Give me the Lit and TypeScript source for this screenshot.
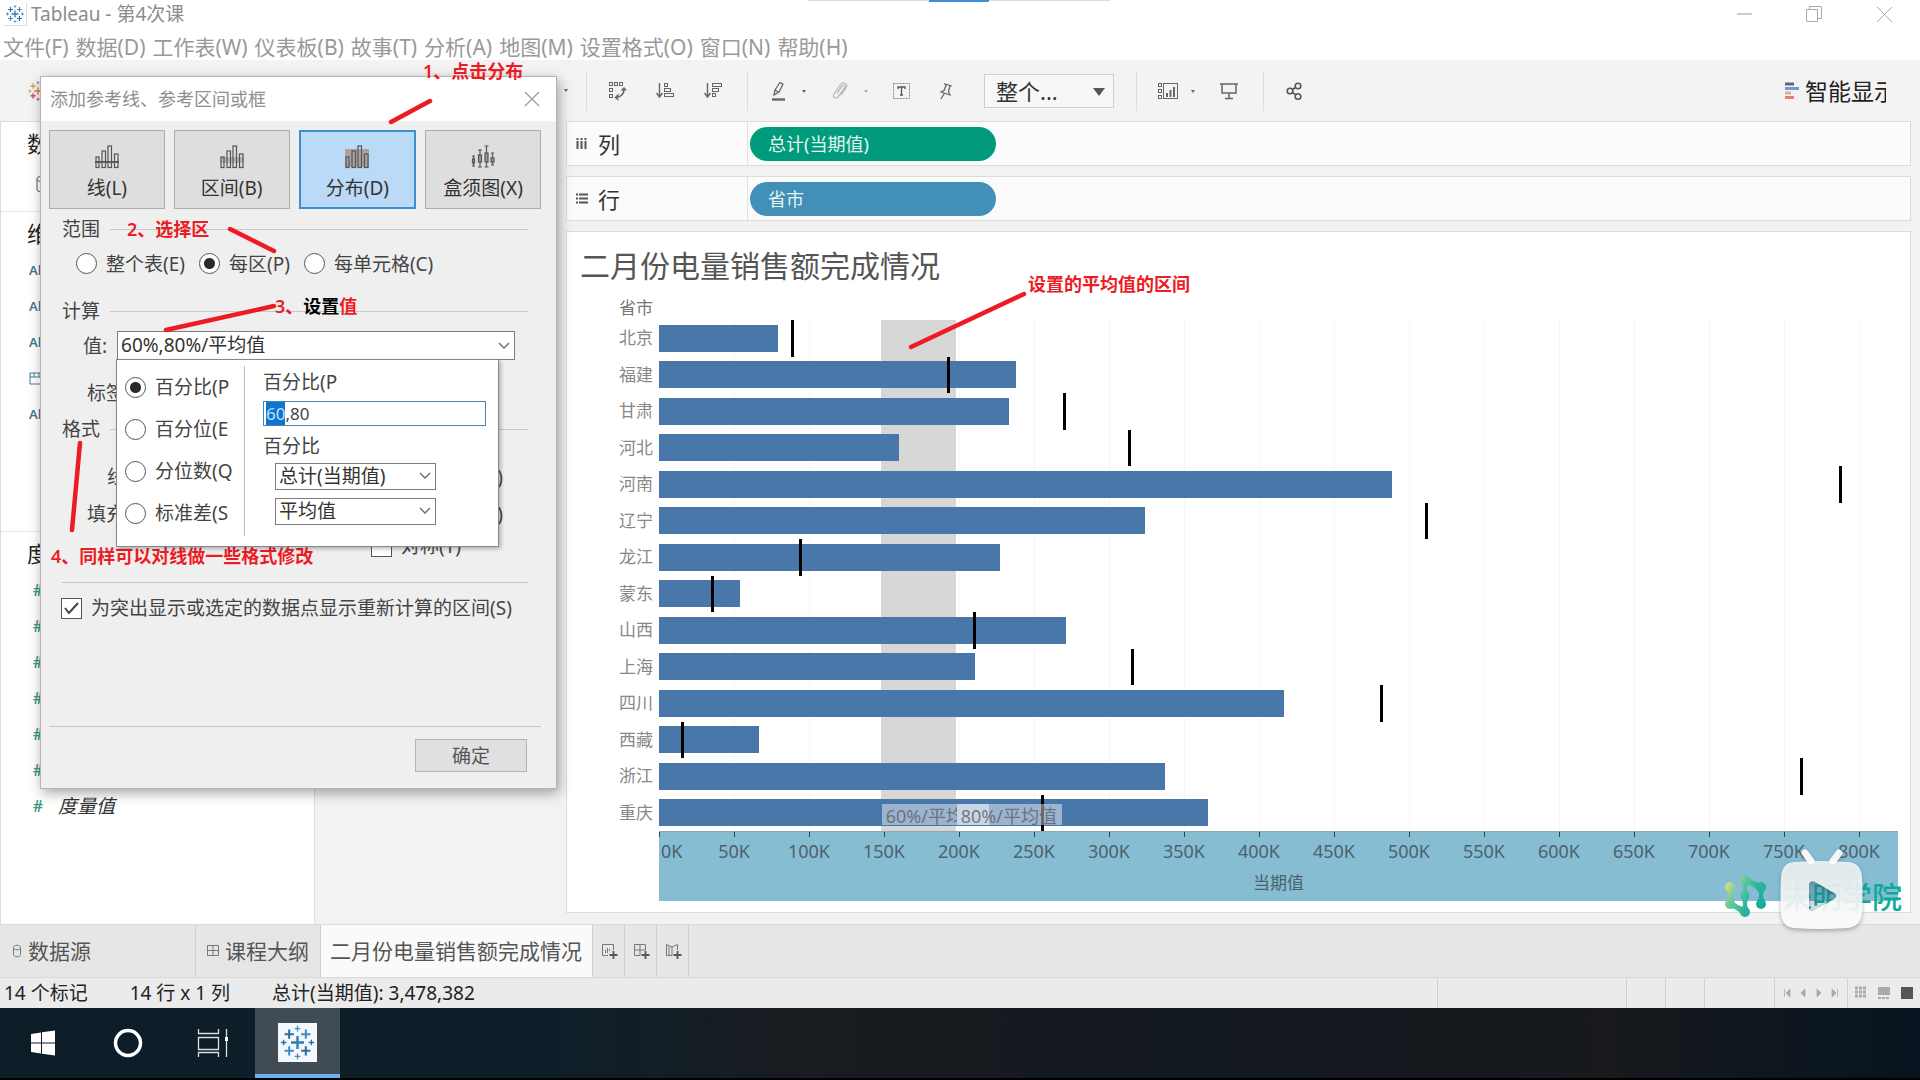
import { LitElement, html, css, svg } from "lit";
import { customElement, query } from "lit/decorators.js";

const AXIS_MAX = 826;
const pct = (v: number) => `${(v / AXIS_MAX) * 100}%`;

interface Region { name: string; value: number; target: number; }

const REGIONS: Region[] = [
  { name: "北京", value: 79.5, target: 88.7 },
  { name: "福建", value: 238, target: 192.4 },
  { name: "甘肃", value: 233, target: 270 },
  { name: "河北", value: 160, target: 313.5 },
  { name: "河南", value: 488.5, target: 787 },
  { name: "辽宁", value: 324, target: 511.5 },
  { name: "龙江", value: 227, target: 94 },
  { name: "蒙东", value: 54, target: 35 },
  { name: "山西", value: 271, target: 210 },
  { name: "上海", value: 210.5, target: 315.5 },
  { name: "四川", value: 416.5, target: 481 },
  { name: "西藏", value: 66.5, target: 15.3 },
  { name: "浙江", value: 337, target: 761 },
  { name: "重庆", value: 366, target: 255 },
];
const TICKS = Array.from({ length: 17 }, (_, i) => i * 50);

const icon = (w: number, h: number, body: unknown) =>
  html`<svg class="icon" width=${w} height=${h} viewBox="0 0 ${w} ${h}" aria-hidden="true">${body}</svg>`;

const plus = (x: number, y: number, r: number, c: string, w: number) =>
  svg`<path d="M${x - r} ${y}H${x + r}M${x} ${y - r}V${y + r}" stroke=${c} stroke-width=${w} fill="none"/>`;

const tableauMark = (size: number, c: string[]) => html`
  <svg class="icon" width=${size} height=${size} viewBox="0 0 40 40" aria-hidden="true">
    ${plus(20, 20, 7, c[0], 2.6)}
    ${plus(11, 11, 5, c[1], 2.2)} ${plus(29, 11, 5, c[2], 2.2)}
    ${plus(11, 29, 5, c[3], 2.2)} ${plus(29, 29, 5, c[4], 2.2)}
    ${plus(20, 5, 3, c[2], 1.4)} ${plus(20, 35, 3, c[3], 1.4)}
    ${plus(5, 20, 3, c[1], 1.4)} ${plus(35, 20, 3, c[4], 1.4)}
  </svg>`;
const BLUES = ["#2d7fb8", "#2a6f9e", "#3a8fc4", "#3a8fc4", "#2a6f9e"];
const MIXED = ["#e8762c", "#c9a13a", "#5b8fb0", "#c03a4a", "#1f457e"];

const caret = (c = "#666") => svg`<path d="M34 9h4l-2 3z" fill=${c}/>`;

const icons = {
  swap: icon(20, 20, svg`<g fill="none" stroke="#666"><rect x="2.500" y="1.500" width="3" height="3"/><rect x="7.500" y="1.500" width="3" height="3"/><rect x="12.500" y="1.500" width="3" height="3"/><rect x="2.500" y="7.500" width="3" height="3"/><rect x="2.500" y="13.500" width="3" height="3"/><path d="M17 8c0 5-3 8-8 8.500M14.500 9.500L17 7l2 2.500M11.500 13.500L8.500 16.500l3 2.500" stroke-width="1.500"/></g>`),
  asc: icon(20, 20, svg`<g fill="none" stroke="#666"><path d="M4.500 2v13M1.500 12l3 4 3-4" stroke-width="1.400"/><rect x="9.500" y="2.500" width="3" height="3"/><rect x="9.500" y="7.500" width="6" height="3"/><rect x="9.500" y="12.500" width="9" height="3"/></g>`),
  desc: icon(20, 20, svg`<g fill="none" stroke="#666"><path d="M4.500 2v13M1.500 12l3 4 3-4" stroke-width="1.400"/><rect x="9.500" y="2.500" width="9" height="3"/><rect x="9.500" y="7.500" width="6" height="3"/><rect x="9.500" y="12.500" width="3" height="3"/></g>`),
  pen: icon(38, 20, svg`<g fill="none" stroke="#666" stroke-width="1.300"><path d="M6 14l1-5 5-7.500 3 1.500-4 8zM7 9l4 2.500"/><path d="M4 18.500h13" stroke-width="2.400"/></g>${caret()}`),
  clip: icon(38, 20, svg`<path d="M7 12l5-7c1.500-2 4 0 2.500 2l-6.500 9c-2 2.500-6 0-4-3l6.500-9.500c2.500-3.500 8-.5 5.500 3.500l-5 7" fill="none" stroke="#bbb" stroke-width="1.300"/>${caret("#aaa")}`),
  text: icon(20, 20, svg`<rect x="1.500" y="2.500" width="16" height="15" fill="none" stroke="#888" stroke-dasharray="2 1"/><path d="M6 8V6h7v2M9.500 6v8M8 14h3" fill="none" stroke="#555" stroke-width="1.300"/>`),
  pin: icon(20, 20, svg`<path d="M9 3l6 2-1.500 1-1 5 1.500 3-9-3 3-1.500 2-5zM8.500 12L5 18" fill="none" stroke="#666" stroke-width="1.300"/>`),
  cards: icon(38, 20, svg`<g fill="none" stroke="#666"><rect x="1.500" y="2.500" width="3" height="3"/><rect x="1.500" y="8.500" width="3" height="3"/><rect x="1.500" y="14.500" width="3" height="3"/><rect x="6.500" y="2.500" width="14" height="15"/><path d="M10 16v-4M13.500 16V9M17 16V6" stroke-width="2"/></g>${caret()}`),
  present: icon(20, 20, svg`<g fill="none" stroke="#666" stroke-width="1.500"><path d="M1 3h18M3 3v9h14V3M10 12v5M6 17.500h8"/></g>`),
  share: icon(20, 20, svg`<g fill="none" stroke="#555" stroke-width="1.600"><circle cx="6" cy="10" r="2.800"/><circle cx="14" cy="5" r="2.800"/><circle cx="14" cy="15.500" r="2.800"/><path d="M8.500 8.500l3-2M8.500 11.500l3 2.200"/></g>`),
  smart: icon(16, 18, svg`<path d="M1 2h9" stroke="#6f6079" stroke-width="3"/><path d="M1 6.500h14" stroke="#6d9bd8" stroke-width="3"/><path d="M1 11h6" stroke="#eda788" stroke-width="3"/><path d="M1 15.500h9" stroke="#e77c78" stroke-width="3"/>`),
  chevron: icon(12, 8, svg`<path d="M1 1l5 5 5-5" fill="none" stroke="#666" stroke-width="1.300"/>`),
};

const miniBars = (extra: unknown) => html`
  <svg class="icon" width="24" height="24" viewBox="0 0 24 24" aria-hidden="true">
    ${extra}
    <g fill="none" stroke="#555" stroke-width="1.200">
      <rect x="1" y="12" width="3" height="10.500"/><rect x="7" y="6" width="3.500" height="16.500"/>
      <rect x="13" y="1" width="3.500" height="21.500"/><rect x="19.500" y="9" width="3.500" height="13.500"/>
    </g>
  </svg>`;

const KINDS = [
  { label: "线(L)", on: false, art: miniBars(svg`<path d="M0 17h24" stroke="#333" stroke-width="1.500"/>`) },
  { label: "区间(B)", on: false, art: miniBars(svg`<rect x="0" y="12" width="24" height="6" fill="#b5b5b5"/>`) },
  { label: "分布(D)", on: true, art: miniBars(svg`<rect x="0" y="4" width="24" height="18" fill="#a9a29e"/>`) },
  { label: "盒须图(X)", on: false, art: html`
    <svg class="icon" width="24" height="24" viewBox="0 0 24 24" aria-hidden="true">
      <g stroke="#555" stroke-width="1.200" fill="#999">
        <path d="M2.500 11v10M9 5v17M15.500 1v21M21.500 8v12M1 11h3M1 21h3M7 5h4M7 22h4M13.500 1h4M13.500 22h4M20 8h3M20 20h3"/>
        <rect x="1.500" y="14" width="2" height="4"/><rect x="7.500" y="10" width="3" height="7"/>
        <rect x="14" y="8" width="3" height="9"/><rect x="20" y="13" width="3" height="4"/>
      </g>
    </svg>` },
];

@customElement("app-root")
export class AppRoot extends LitElement {
  @query("#percents") private percents!: HTMLInputElement;

  static styles = css`
    :host {
      display: flex; flex-direction: column; position: relative; min-height: 100vh; overflow: hidden;
      font-family: "Noto Sans", "Noto Sans CJK SC", sans-serif; font-size: 19px; line-height: 24px;
      color: #444; background: #fff;
    }
    *, *::before, *::after { box-sizing: border-box; }
    button, input, select { font: inherit; color: inherit; margin: 0; }
    button { background: none; border: 0; padding: 0; white-space: nowrap; }
    .icon { display: block; flex: none; }
    h1, h2, p { margin: 0; font-weight: 400; }

    .titlebar { display: flex; align-items: center; gap: 4px; height: 34px; padding: 0 27px 6px 4px; color: #8c8c8c; }
    .appicon { border: 1px solid #ddd; border-width: 0 1px 1px 0; padding: 1px; }
    .controls { margin-left: auto; display: flex; gap: 52px; }
    .notch { position: absolute; top: 0; left: 808px; width: 302px; height: 1px; background: #ddd; display: flex; justify-content: center; }
    .notch i { width: 60px; height: 2px; background: #3f8fd8; }
    .menu { display: flex; gap: 7px; height: 26px; padding-left: 3px; font-size: 21px; line-height: 26px; color: #999; }

    .toolbar { display: flex; align-items: center; height: 61px; padding: 0 34px 0 27px; background: #f3f3f3; }
    .first { width: 537px; }
    .sep { width: 1px; height: 40px; background: #ddd; margin: 0 20px 0 18px; }
    .tools { display: flex; align-items: center; gap: 24px; padding-right: 6px; }
    .wide { gap: 28px; }
    .fit { display: flex; position: relative; margin: 0 4px 0 22px; }
    .fit select { appearance: none; width: 130px; height: 34px; padding: 0 40px 0 11px; border: 1px solid #d0d0d0; border-radius: 0; background: #f7f7f7; font-size: 22px; line-height: 32px; color: #333; }
    .fit::after { content: ""; position: absolute; right: 9px; top: 14px; border: 6px solid transparent; border-top: 8px solid #555; border-bottom: 0; }
    .smart { margin-left: auto; display: flex; align-items: center; gap: 5px; width: 102px; overflow: hidden; font-size: 23px; line-height: 32px; color: #222; }

    .body { flex: 1; display: flex; background: #f2f2f2; }
    .side { width: 315px; background: #fff; border: 1px solid #dcdcdc; border-width: 1px 1px 0 1px; display: flex; flex-direction: column; font-size: 22px; color: #222; padding-top: 8px; }
    .side .head { height: 26px; padding-left: 26px; line-height: 26px; }
    .side .db { height: 37px; padding: 8px 0 0 35px; margin-top: 11px; }
    .side .rule { height: 1px; background: #e6e6e6; margin: 7px 0 8px; }
    .side ul { list-style: none; margin: 0; padding: 6px 0 0; font-size: 19px; }
    .side li { height: 36px; display: flex; align-items: center; gap: 15px; padding-left: 28px; font-size: 13px; font-weight: 600; color: #3d7d96; }
    .side li.num { font-size: 16px; color: #3f9a86; }
    .side li em { font-size: 19px; font-weight: 400; color: #333; }
    .hash { width: 14px; text-align: right; }
    .dims { height: 304px; }

    .work { flex: 1; min-width: 0; margin: 0 9px 11px 251px; display: flex; flex-direction: column; gap: 10px; }
    .shelf { display: flex; height: 45px; border: 1px solid #dcdcdc; background: #fbfbfb; color: #333; }
    .shelf .name { width: 181px; border-right: 1px solid #e0e0e0; display: flex; align-items: center; gap: 10px; padding-left: 9px; font-size: 22px; }
    .pill { align-self: center; width: 246px; height: 34px; margin-left: 2px; padding-left: 18px; border-radius: 17px; text-align: left; font-size: 18px; color: #e6f5f2; background: #009b7d; }
    .pill.dim { background: #428fb8; }
    .view { flex: 1; display: flex; flex-direction: column; border: 1px solid #dcdcdc; background: #fff; padding: 14px 12px 11px 0; }
    .view h1 { font-size: 30px; line-height: 40px; padding-left: 13px; color: #555; }
    .chart { flex: 1; display: grid; grid-template-columns: 92px 1fr; grid-template-rows: 34px 1fr 70px; font-size: 17px; color: #888; }
    .field { text-align: right; padding: 11px 6px 0 0; line-height: 22px; color: #777; }
    .names { grid-row: 2; display: flex; flex-direction: column; text-align: right; padding-right: 6px; }
    .names span { flex: 1; display: flex; align-items: center; justify-content: flex-end; }
    .plot { grid-row: 2; grid-column: 2; position: relative; display: flex; flex-direction: column; }
    .grid { position: absolute; top: 0; bottom: 0; width: 1px; background: #f6f6f6; }
    .band { position: absolute; top: 0; bottom: 0; background: #d7d7d7; }
    .row { flex: 1; position: relative; display: flex; align-items: center; }
    .bar { height: 75%; background: #4a77aa; }
    .mark { position: absolute; top: 0; bottom: 0; width: 3px; margin-left: -1px; background: #000; }
    .reflabel { position: absolute; bottom: 6px; height: 21px; line-height: 25px; padding: 0 5px 0 4px; font-size: 18px; color: rgba(95, 95, 100, 0.8); background: rgba(255, 255, 255, 0.45); white-space: nowrap; }
    .reflabel b { display: block; font-weight: 400; width: 71px; overflow: hidden; }
    .reflabel.cut { padding-right: 32px; }
    .axis { grid-row: 3; grid-column: 2; position: relative; background: #86bdd3; border-top: 1px solid #8fa9b3; color: #4c626c; font-size: 18px; }
    .tick { position: absolute; top: 0; width: 1px; height: 5px; background: #345; font-style: normal; }
    .tick span { position: absolute; top: 7px; left: 0; transform: translateX(-50%); }
    .tick.zero span { transform: none; left: 2px; }
    .axis p { padding-top: 39px; text-align: center; font-size: 17px; }

    .tabs { display: flex; height: 53px; background: #e6e6e6; border-top: 1px solid #dcdcdc; font-size: 21px; }
    .tabs button { display: flex; align-items: center; gap: 5px; padding: 0 11px 0 10px; border-right: 1px solid #cfcfcf; color: #555; }
    .tabs .source { width: 196px; padding-left: 12px; }
    .tabs .active { background: #fafafa; padding: 0 10px 0 9px; }
    .tabs .add { width: 32px; padding: 0; justify-content: center; }
    .status { display: flex; align-items: stretch; height: 31px; background: #ebebeb; border-top: 1px solid #d8d8d8; color: #222; line-height: 31px; }
    .counts { display: flex; gap: 42px; padding-left: 4px; margin-right: auto; }
    .cell { border-left: 1px solid #cfcfcf; display: flex; align-items: center; justify-content: center; gap: 10px; width: 39px; }
    .c189 { width: 189px; } .c69 { width: 70px; } .c74 { width: 73px; }
    .taskbar { display: flex; height: 72px; border-bottom: 2px solid #000; background: linear-gradient(90deg, #0c1d28 0%, #0e1f2a 28%, #191c20 42%, #12181f 62%, #17191d 84%, #06141f 100%); }
    .taskbar button { width: 85px; display: flex; align-items: center; justify-content: center; }
    .taskbar .running { background: #404b54; border-bottom: 4px solid #6fb1ee; padding-top: 2px; }
    .tile { background: #f4f7fb; padding: 1px; }

    .dialog { position: absolute; left: 40px; top: 76px; width: 517px; border: 1px solid #b4b4b4; background: #efefef; box-shadow: 2px 4px 12px rgba(0, 0, 0, 0.35); padding-bottom: 16px; }
    .dialog header { display: flex; align-items: center; justify-content: space-between; height: 44px; padding: 0 16px 0 9px; background: #fff; }
    .dialog h2 { font-size: 18px; color: #8f8f8f; }
    .content { padding: 9px 15px 0 8px; display: flex; flex-direction: column; }
    .kinds { display: flex; gap: 9px; }
    .kinds button { flex: 1; height: 79px; border: 1px solid #adadad; background: #dedede; display: flex; flex-direction: column; align-items: center; gap: 7px; padding-top: 14px; color: #333; }
    .kinds .on { background: #bbdaf7; border: 2px solid #3c8fd0; padding-top: 13px; }
    .legend { display: flex; align-items: center; gap: 10px; margin: 8px 13px 0 13px; }
    .legend::after { content: ""; flex: 1; height: 1px; background: #c8c8c8; }
    input[type="radio"] { appearance: none; width: 21px; height: 21px; border: 1px solid #555; border-radius: 50%; background: #fff; flex: none; }
    input[type="radio"]:checked { background: radial-gradient(circle, #2a2a2a 0 5px, #fff 6px); }
    input[type="checkbox"] { appearance: none; width: 21px; height: 21px; border: 1px solid #555; background: #fff; flex: none; }
    .tickbox { position: relative; display: flex; }
    .tickbox svg { position: absolute; left: 3px; top: 4px; pointer-events: none; }
    .scope { display: flex; gap: 14px; padding: 8px 0 0 27px; height: 37px; align-items: center; }
    .opt { display: flex; align-items: center; gap: 9px; white-space: nowrap; }
    .scoped { margin-top: 21px; }
    .value { position: relative; display: flex; align-items: center; margin: 8px 26px 0 34px; gap: 10px; }
    .combo { position: relative; display: flex; flex: 1; }
    .combo select { appearance: none; width: 100%; height: 29px; padding: 0 24px 0 3px; border: 1px solid #7d7d7d; border-radius: 0; background: #fff; color: #333; line-height: 27px; }
    .combo > .icon { position: absolute; right: 5px; top: 11px; pointer-events: none; }
    .popup { position: absolute; z-index: 1; left: 33px; top: 28px; width: 383px; height: 188px; border: 1px solid #888; background: #fff; display: flex; box-shadow: 2px 2px 4px rgba(0, 0, 0, 0.25); }
    .modes { width: 128px; margin: 6px 0 10px; border-right: 1px solid #bbb; padding: 9px 0 0 8px; display: flex; flex-direction: column; gap: 18px; }
    .modes .opt { width: 108px; overflow: hidden; }
    .right { flex: 1; padding: 10px 12px 0 18px; display: flex; flex-direction: column; }
    .right input { height: 25px; width: 100%; border: 1px solid #4a7fb5; padding: 0 2px; margin: 7px 0 8px; outline: 0; font-size: 17px; background: #fff; }
    .right input::selection { background: #0f74cf; color: #bfe0ff; }
    .stack { display: flex; flex-direction: column; gap: 8px; width: 161px; margin: 5px 0 0 12px; }
    .stack select { height: 27px; line-height: 25px; }
    .stack .combo > .icon { top: 9px; }
    .field-row { display: flex; justify-content: space-between; padding: 0 38px 0 38px; margin-top: 21px; }
    .format { margin-top: 12px; }
    .line { margin-top: 24px; padding-left: 58px; }
    .fill { margin-top: 13px; }
    .sym { margin: 8px 0 0 322px; }
    .divider { height: 1px; background: #c4c4c4; margin: 24px 13px 13px; }
    .recalc { margin-left: 12px; }
    .foot { display: flex; justify-content: flex-end; border-top: 1px solid #c4c4c4; margin-top: 106px; padding: 12px 14px 0 0; }
    .foot button { width: 112px; height: 33px; border: 1px solid #b4b4b4; background: #e0e0e0; color: #555; }

    .ink { position: absolute; left: 0; top: 0; pointer-events: none; overflow: visible; }
    .note { position: absolute; font-size: 18px; font-weight: 600; line-height: 24px; color: #ed1c24; white-space: nowrap; }
    .note b { color: #000; font-weight: 600; }
    .n1 { left: 423px; top: 59px; } .n2 { left: 127px; top: 217px; } .n3 { left: 275px; top: 294px; }
    .n4 { left: 51px; top: 544px; } .n5 { left: 1028px; top: 272px; }
    .brand { position: absolute; right: 18px; bottom: 150px; width: 180px; height: 82px; }
    .brand svg { position: absolute; left: 0; top: 0; overflow: visible; }
    .brand .box { filter: drop-shadow(0 2px 2px rgba(60, 60, 60, 0.4)); }
    .brand span { position: absolute; left: 60px; top: 29px; font-size: 30px; line-height: 40px; font-weight: 500; color: #0fa99c; white-space: nowrap; }
  `;

  firstUpdated() {
    this.percents.focus();
    this.percents.setSelectionRange(0, 2);
  }

  private renderDialog() {
    return html`
      <section class="dialog" role="dialog" aria-labelledby="dlg">
        <header>
          <h2 id="dlg">添加参考线、参考区间或框</h2>
          <button aria-label="关闭">${icon(16, 16, svg`<path d="M1 1l14 14M15 1L1 15" stroke="#999" stroke-width="1.200"/>`)}</button>
        </header>
        <div class="content">
          <div class="kinds">${KINDS.map((k) => html`<button class=${k.on ? "on" : ""}>${k.art}<span>${k.label}</span></button>`)}</div>
          <div class="legend">范围</div>
          <div class="scope">
            <label class="opt"><input type="radio" name="scope" />整个表(E)</label>
            <label class="opt"><input type="radio" name="scope" checked />每区(P)</label>
            <label class="opt"><input type="radio" name="scope" />每单元格(C)</label>
          </div>
          <div class="legend scoped">计算</div>
          <div class="value">
            <label for="value">值:</label>
            <div class="combo"><select id="value"><option>60%,80%/平均值</option></select>${icons.chevron}</div>
            <div class="popup">
              <div class="modes">
                <label class="opt"><input type="radio" name="mode" checked />百分比(P</label>
                <label class="opt"><input type="radio" name="mode" />百分位(E</label>
                <label class="opt"><input type="radio" name="mode" />分位数(Q</label>
                <label class="opt"><input type="radio" name="mode" />标准差(S</label>
              </div>
              <div class="right">
                <label for="percents">百分比(P</label>
                <input id="percents" type="text" value="60,80" />
                <label for="measure">百分比</label>
                <div class="stack">
                  <div class="combo"><select id="measure"><option>总计(当期值)</option></select>${icons.chevron}</div>
                  <div class="combo"><select aria-label="平均值"><option>平均值</option></select>${icons.chevron}</div>
                </div>
              </div>
            </div>
          </div>
          <div class="field-row"><span>标签</span></div>
          <div class="legend format">格式</div>
          <div class="field-row line"><span>线</span><span>)</span></div>
          <div class="field-row fill"><span>填充</span><span>)</span></div>
          <label class="opt sym"><input type="checkbox" />对称(T)</label>
          <div class="divider"></div>
          <label class="opt recalc"><span class="tickbox"><input type="checkbox" checked />${icon(15, 13, svg`<path d="M1 6l4 5 9-10" fill="none" stroke="#444" stroke-width="2"/>`)}</span>为突出显示或选定的数据点显示重新计算的区间(S)</label>
          <div class="foot"><button>确定</button></div>
        </div>
      </section>`;
  }

  private renderChart() {
    return html`
      <div class="chart">
        <div class="field">省市</div>
        <div class="names">${REGIONS.map((r) => html`<span>${r.name}</span>`)}</div>
        <div class="plot">
          ${TICKS.slice(1).map((t) => html`<i class="grid" style="left:${pct(t)}"></i>`)}
          <i class="band" style="left:${pct(148)};width:${pct(50)}"></i>
          ${REGIONS.map((r) => html`<div class="row"><div class="bar" style="width:${pct(r.value)}"></div><i class="mark" style="left:${pct(r.target)}"></i></div>`)}
          <div class="reflabel cut" style="left:${pct(148.5)}"><b>60%/平均值</b></div>
          <div class="reflabel" style="left:${pct(198.5)}">80%/平均值</div>
        </div>
        <div class="axis">
          ${TICKS.map((t) => html`<i class="tick ${t ? "" : "zero"}" style="left:${pct(t)}"><span>${t}K</span></i>`)}
          <p>当期值</p>
        </div>
      </div>`;
  }

  render() {
    const menus = ["文件(F)", "数据(D)", "工作表(W)", "仪表板(B)", "故事(T)", "分析(A)", "地图(M)", "设置格式(O)", "窗口(N)", "帮助(H)"];
    const add = svg`<path d="M13.500 9v8M9.500 13h8" stroke="#555" stroke-width="1.800"/>`;
    return html`
      <div class="titlebar">
        <span class="appicon">${tableauMark(20, BLUES)}</span>Tableau - 第4次课
        <div class="controls">
          <button aria-label="最小化">${icon(18, 18, svg`<path d="M2 9h15" stroke="#aaa" stroke-width="1.200"/>`)}</button>
          <button aria-label="还原">${icon(18, 18, svg`<path d="M1.500 4.500h11v12h-11zM4.500 4V1.500h12v12H13" fill="none" stroke="#aaa"/>`)}</button>
          <button aria-label="关闭">${icon(18, 18, svg`<path d="M2 2l15 15M17 2L2 17" stroke="#aaa"/>`)}</button>
        </div>
      </div>
      <div class="notch"><i></i></div>
      <nav class="menu">${menus.map((m) => html`<button>${m}</button>`)}</nav>
      <div class="toolbar">
        <div class="first">${tableauMark(22, MIXED)}</div>
        ${icon(4, 4, svg`<path d="M0 0h4l-2 3z" fill="#666"/>`)}
        <i class="sep"></i>
        <div class="tools wide">
          <button aria-label="交换">${icons.swap}</button><button aria-label="升序">${icons.asc}</button><button aria-label="降序">${icons.desc}</button>
        </div>
        <i class="sep"></i>
        <div class="tools">
          <button aria-label="突出显示">${icons.pen}</button><button aria-label="分组">${icons.clip}</button>
          <button aria-label="标签">${icons.text}</button><button aria-label="固定">${icons.pin}</button>
        </div>
        <div class="fit"><select aria-label="适合"><option>整个...</option></select></div>
        <i class="sep"></i>
        <div class="tools">
          <button aria-label="卡">${icons.cards}</button><button aria-label="演示">${icons.present}</button>
        </div>
        <i class="sep"></i>
        <button aria-label="共享">${icons.share}</button>
        <button class="smart">${icons.smart}智能显示</button>
      </div>
      <div class="body">
        <aside class="side">
          <div class="head">数据</div>
          <div class="db">${icon(14, 18, svg`<path d="M1 4v10c0 4 12 4 12 0V4M1 4c0-4 12-4 12 0s-12 4-12 0z" fill="none" stroke="#777" stroke-width="1.200"/>`)}</div>
          <div class="rule"></div>
          <div class="dims">
            <div class="head">维度</div>
            <ul><li>Abc</li><li>Abc</li><li>Abc</li>
              <li>${icon(15, 14, svg`<path d="M1 2h13v11H1zM1 6h13M5 2v4M10 2v4" fill="none" stroke="#3d7d96"/>`)}</li><li>Abc</li></ul>
          </div>
          <div class="rule"></div>
          <div class="head">度量</div>
          <ul>
            ${[0, 1, 2, 3, 4].map(() => html`<li class="num"><span class="hash">#</span></li>`)}
            <li class="num"><span class="hash">#</span></li>
            <li class="num"><span class="hash">#</span><em>度量值</em></li>
          </ul>
        </aside>
        <main class="work">
          <div class="shelf">
            <div class="name">${icon(12, 12, svg`<path d="M1.500 0v2M5.500 0v2M9.500 0v2M1.500 3v8M5.500 3v8M9.500 3v8" stroke="#555" stroke-width="2"/>`)}列</div>
            <button class="pill">总计(当期值)</button>
          </div>
          <div class="shelf">
            <div class="name">${icon(12, 12, svg`<path d="M0 1.500h2M0 5.500h2M0 9.500h2M3 1.500h9M3 5.500h9M3 9.500h9" stroke="#555" stroke-width="2"/>`)}行</div>
            <button class="pill dim">省市</button>
          </div>
          <div class="view">
            <h1>二月份电量销售额完成情况</h1>
            ${this.renderChart()}
          </div>
        </main>
      </div>
      <div class="tabs">
        <button class="source">${icon(11, 14, svg`<path d="M1.500 3.500v7c0 3 7 3 7 0v-7M1.500 3.500c0-3 7-3 7 0s-7 3-7 0z" fill="none" stroke="#777"/>`)}数据源</button>
        <button>${icon(14, 14, svg`<path d="M1.500 1.500h11v10h-11zM7 1.500v10M1.500 6.500h11" fill="none" stroke="#777"/>`)}课程大纲</button>
        <button class="active">二月份电量销售额完成情况</button>
        <button class="add" aria-label="新建工作表">${icon(18, 18, svg`<path d="M8 13.500H2.500v-11h11V8M5.500 11V8M7.500 11V6M9.500 9V7" fill="none" stroke="#777"/>${add}`)}</button>
        <button class="add" aria-label="新建仪表板">${icon(18, 18, svg`<path d="M8 13.500H2.500v-11h11V8M8 2.500v11M2.500 8h11" fill="none" stroke="#777"/>${add}`)}</button>
        <button class="add" aria-label="新建故事">${icon(18, 18, svg`<path d="M8 13.500H2.500v-11L8 5l5.500-2.500V8M8 5v9M5 4v9" fill="none" stroke="#777"/>${add}`)}</button>
      </div>
      <div class="status">
        <div class="counts"><span>14 个标记</span><span>14 行 x 1 列</span><span>总计(当期值): 3,478,382</span></div>
        <div class="cell c189"></div><div class="cell"></div><div class="cell"></div><div class="cell c69"></div>
        <div class="cell c74">${icon(56, 10, svg`<path d="M1.500 1v8M7 1L3 5l4 4zM22 1l-4 4 4 4zM34 1l4 4-4 4zM49 1l4 4-4 4zM54.500 1v8" fill="#aaa" stroke="#aaa" stroke-width=".8"/>`)}</div>
        <div class="cell c74">${icon(58, 14, svg`<path d="M0 2h12M0 6h12M0 10h12" stroke="#aaa" stroke-width="3" stroke-dasharray="3 1"/><path d="M23 1h12v8H23zM23 11h3v2h-3zM27 11h3v2h-3zM31 11h3v2h-3z" fill="#aaa"/><path d="M46 1h12v12H46z" fill="#555"/>`)}</div>
      </div>
      <div class="taskbar">
        <button aria-label="开始">${icon(26, 26, svg`<path d="M1 4l10-1.500v10H1zM12 2.300L25 .5v12H12zM1 13.500h10v10L1 22zM12 13.500h13v12L12 23.700z" fill="#fff"/>`)}</button>
        <button aria-label="搜索">${icon(32, 32, svg`<circle cx="16" cy="16" r="12.500" fill="none" stroke="#fff" stroke-width="3.500"/>`)}</button>
        <button aria-label="任务视图">${icon(32, 28, svg`<path d="M1.500 0v4.500h20V0M1.500 8.500h20v12h-20zM1.500 28v-4.500h20V28M29.500 0v28" fill="none" stroke="#ddd" stroke-width="1.300"/><rect x="28" y="8" width="3" height="4" fill="#fff"/>`)}</button>
        <button class="running" aria-label="Tableau"><span class="tile">${tableauMark(37, BLUES)}</span></button>
      </div>
      ${this.renderDialog()}
      <svg class="ink" width="1" height="1" aria-hidden="true">
        <path d="M391 122L430 101M230 229L274 251M166 330L274 306M80 443L72 530M911 347L1024 294" stroke="#ed1c24" stroke-width="4.500" stroke-linecap="round"/>
        <path d="M252 413v21l5-5 4 9 4-2-4-8h7z" fill="#fff" stroke="#444" stroke-width="1.200"/>
      </svg>
      <span class="note n1">1、点击分布</span>
      <span class="note n2">2、选择区</span>
      <span class="note n3">3、<b>设置</b>值</span>
      <span class="note n4">4、同样可以对线做一些格式修改</span>
      <span class="note n5">设置的平均值的区间</span>
      <div class="brand">
        <span>未明学院</span>
        <svg width="180" height="82" viewBox="0 0 180 82" aria-hidden="true">
          <defs>
            <linearGradient id="g" gradientUnits="userSpaceOnUse" x1="2" y1="36" x2="44" y2="60"><stop offset="0" stop-color="#e0e56e"/><stop offset=".3" stop-color="#6cc9a0"/><stop offset=".6" stop-color="#2fb59b"/><stop offset="1" stop-color="#0fa89f"/></linearGradient>
            <linearGradient id="w" x1="0" x2="0" y1="0" y2="1"><stop offset="0" stop-color="#fff" stop-opacity=".78"/><stop offset="1" stop-color="#fff" stop-opacity=".94"/></linearGradient>
          </defs>
          <g fill="url(#g)">
            <circle cx="8" cy="39" r="5"/><circle cx="8" cy="56" r="5"/><circle cx="23" cy="32" r="5"/><circle cx="23" cy="48" r="4.500"/>
            <circle cx="23" cy="64" r="5"/><circle cx="39" cy="39" r="5"/><circle cx="39" cy="56" r="5"/>
            <path d="M4 42q4 5 0 11h8q-4-6 0-11zM19 35q4 5 0 11h8q-4-6 0-11zM19 50q4 6 0 12h8q-4-6 0-12zM35 42q4 5 0 11h8q-4-6 0-11zM6 60q7-1 13 6l5-7q-7 0-12-5zM22 37q7-1 13 5l5-7q-7 0-14-6z"/>
          </g>
          <g class="box">
            <path d="M83 5l6 8M117 5l-6 8" stroke="#fff" stroke-opacity=".92" stroke-width="7" stroke-linecap="round"/>
            <path fill-rule="evenodd" d="M72 14q27-2 54 0 13 1 14 15 1 18 0 36-1 13-14 15-27 2-54 0-12-1-13-15-1-18 0-36 1-14 13-15zM87 36v24q1 5 6 2l19-11q5-3 0-6l-19-11q-5-2-6 2z" fill="url(#w)"/>
          </g>
          <path d="M87 36v24q1 5 6 2l19-11q5-3 0-6l-19-11q-5-2-6 2z" fill="#357" fill-opacity=".2"/>
        </svg>
      </div>
    `;
  }
}
